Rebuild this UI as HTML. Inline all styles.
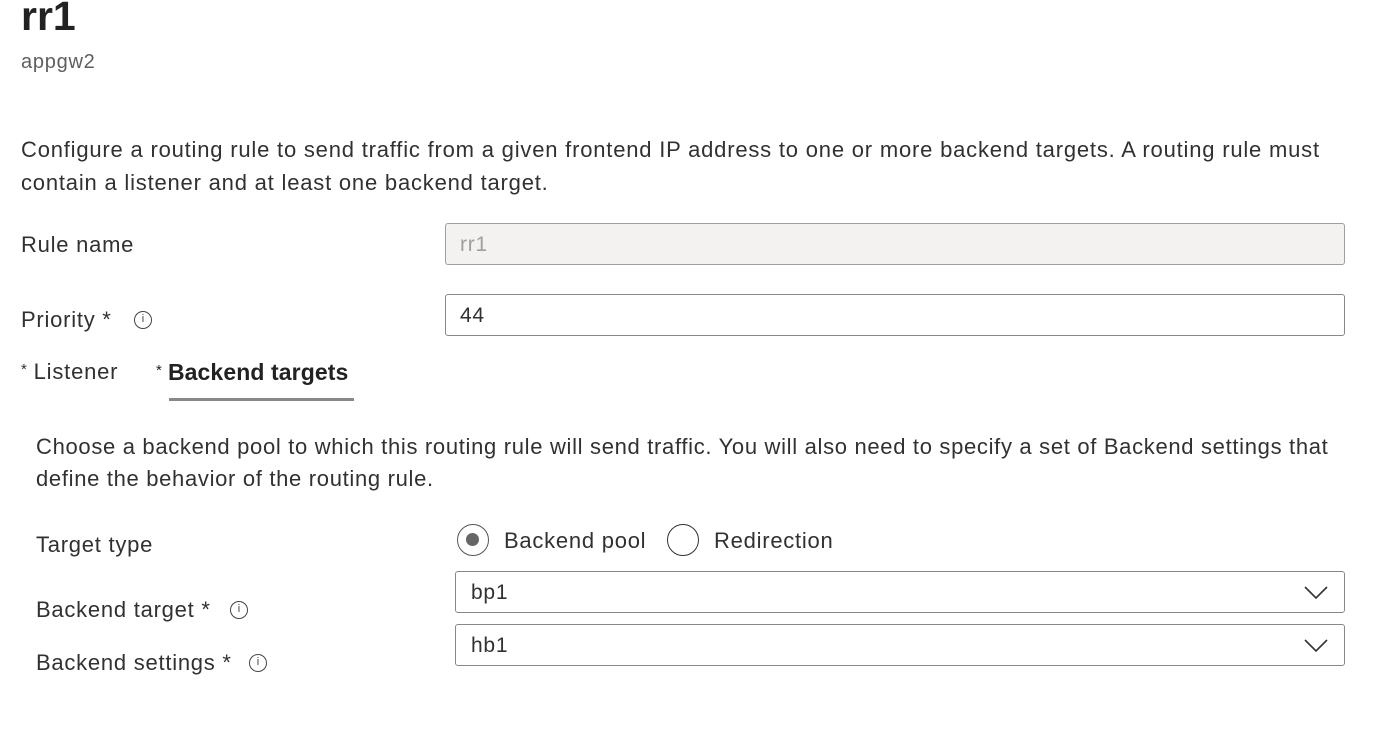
<!DOCTYPE html>
<html><head><meta charset="utf-8"><style>
body{margin:0;width:1400px;height:746px;background:#fff;font-family:"Liberation Sans",sans-serif;color:#323130;position:relative;overflow:hidden;letter-spacing:0.75px}
.a{position:absolute;white-space:nowrap;line-height:1}
.box{position:absolute;border:1px solid #8a8886;border-radius:3px;box-sizing:border-box;background:#fff}
.info{position:absolute;width:18px;height:18px;border:1.5px solid #444;border-radius:50%;box-sizing:border-box;font-size:11px;text-align:center;line-height:15px;color:#444;letter-spacing:0}
.chev{position:absolute;right:16px;top:14px}
</style></head><body>
<div class="a" style="left:21px;top:-4px;font-size:41px;font-weight:bold;color:#222;letter-spacing:0">rr1</div>
<div class="a" style="left:21px;top:52px;font-size:20px;color:#605e5c">appgw2</div>
<div class="a" style="left:21px;top:133px;font-size:22px;line-height:33px;letter-spacing:0.8px">Configure a routing rule to send traffic from a given frontend IP address to one or more backend targets. A routing rule must<br>contain a listener and at least one backend target.</div>
<div class="a" style="left:21px;top:234px;font-size:22px">Rule name</div>
<div class="box" style="left:445px;top:223px;width:900px;height:42px;background:#f3f2f1;border-color:#a19f9d"><span class="a" style="left:14px;top:10px;font-size:21px;color:#a19f9d">rr1</span></div>
<div class="a" style="left:21px;top:309px;font-size:22px">Priority *</div>
<div class="info" style="left:134px;top:311px">i</div>
<div class="box" style="left:445px;top:294px;width:900px;height:42px"><span class="a" style="left:14px;top:10px;font-size:21px">44</span></div>
<div class="a" style="left:21px;top:361px;font-size:22px;letter-spacing:0.8px"><span style="font-size:15px;vertical-align:5px">*</span><span style="margin-left:6px">Listener</span></div>
<div class="a" style="left:156px;top:361px;font-size:23px;font-weight:bold;color:#222;letter-spacing:0.1px"><span style="font-size:15px;vertical-align:5px;font-weight:normal">*</span><span style="margin-left:6px">Backend targets</span></div>
<div style="position:absolute;left:169px;top:398px;width:185px;height:3px;background:#8a8886"></div>
<div class="a" style="left:36px;top:431px;font-size:22px;line-height:32px;letter-spacing:0.68px">Choose a backend pool to which this routing rule will send traffic. You will also need to specify a set of Backend settings that<br>define the behavior of the routing rule.</div>
<div class="a" style="left:36px;top:534px;font-size:22px">Target type</div>
<div style="position:absolute;left:457px;top:524px;width:32px;height:32px;border:1.5px solid #555;border-radius:50%;box-sizing:border-box"><div style="position:absolute;left:8px;top:8px;width:13px;height:13px;border-radius:50%;background:#666"></div></div>
<div class="a" style="left:504px;top:530px;font-size:22px">Backend pool</div>
<div style="position:absolute;left:667px;top:524px;width:32px;height:32px;border:1.5px solid #333;border-radius:50%;box-sizing:border-box"></div>
<div class="a" style="left:714px;top:530px;font-size:22px">Redirection</div>
<div class="a" style="left:36px;top:599px;font-size:22px">Backend target *</div>
<div class="info" style="left:230px;top:601px">i</div>
<div class="a" style="left:36px;top:652px;font-size:22px">Backend settings *</div>
<div class="info" style="left:249px;top:654px">i</div>
<div class="box" style="left:455px;top:571px;width:890px;height:42px"><span class="a" style="left:15px;top:10px;font-size:21px">bp1</span><svg class="chev" width="24" height="14" viewBox="0 0 24 14"><path d="M1 1L12 12L23 1" fill="none" stroke="#333" stroke-width="1.6"/></svg></div>
<div class="box" style="left:455px;top:624px;width:890px;height:42px"><span class="a" style="left:15px;top:10px;font-size:21px">hb1</span><svg class="chev" width="24" height="14" viewBox="0 0 24 14"><path d="M1 1L12 12L23 1" fill="none" stroke="#333" stroke-width="1.6"/></svg></div>
</body></html>
